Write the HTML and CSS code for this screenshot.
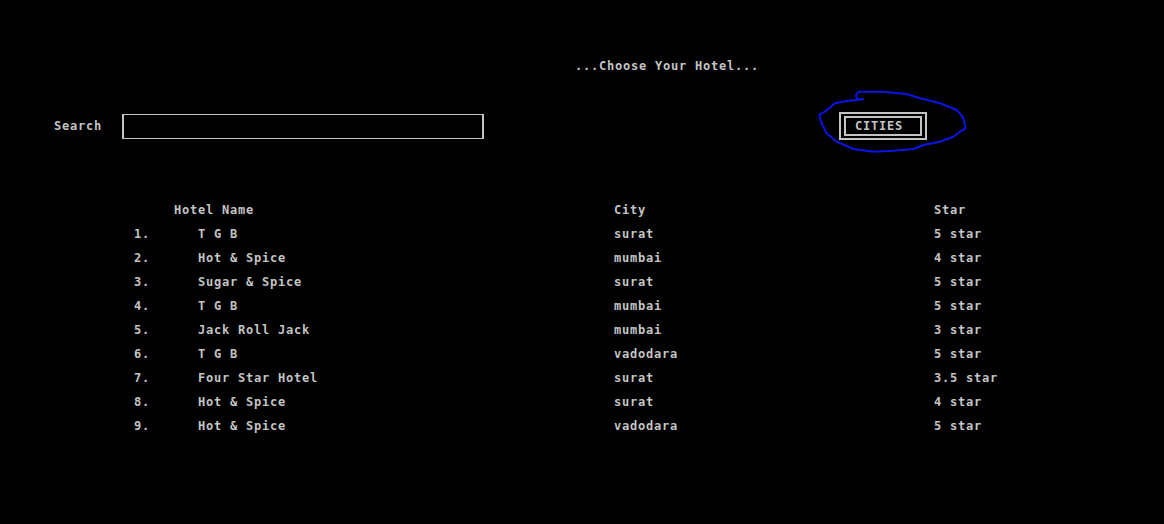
FILE: index.html
```html
<!DOCTYPE html>
<html>
<head>
<meta charset="utf-8">
<link rel="stylesheet" href="styles.css">
</head>
<body>
<div class="screen">
  <div class="title">...Choose Your Hotel...</div>
  <div class="search-row">
    <span class="label">Search</span>
    <div class="input"></div>
    <div class="cities"><span class="cities-inner">CITIES</span></div>
  </div>
  <div class="list">
    <div class="head-name">Hotel Name</div>
    <div class="head-city">City</div>
    <div class="head-star">Star</div>

    <div>1.</div><div>T G B</div><div>surat</div><div>5 star</div>
    <div>2.</div><div>Hot &amp; Spice</div><div>mumbai</div><div>4 star</div>
    <div>3.</div><div>Sugar &amp; Spice</div><div>surat</div><div>5 star</div>
    <div>4.</div><div>T G B</div><div>mumbai</div><div>5 star</div>
    <div>5.</div><div>Jack Roll Jack</div><div>mumbai</div><div>3 star</div>
    <div>6.</div><div>T G B</div><div>vadodara</div><div>5 star</div>
    <div>7.</div><div>Four Star Hotel</div><div>surat</div><div>3.5 star</div>
    <div>8.</div><div>Hot &amp; Spice</div><div>surat</div><div>4 star</div>
    <div>9.</div><div>Hot &amp; Spice</div><div>vadodara</div><div>5 star</div>
  </div>
  <svg class="scribble" width="1164" height="524" viewBox="0 0 1164 524">
    <path d="M863.3 99.3 L856.7 99 L856 95 L858.3 91.7 L883.3 91.7 L906.7 94 L916.7 97.3 L940 103.3 L956.7 110 L962.7 116.7 L965.7 128.3 L960 131.7 L953.3 136.7 L940 141.7 L923.3 145 L913.3 149 L893.3 150.7 L873.3 151.7 L853.3 149 L836.7 141.7 L826.7 133.3 L821.7 123.3 L819.3 115 L825 111.7 L835 103.3 L846.7 101 L863.3 99.3" fill="none" stroke="#0a14e6" stroke-width="2" stroke-linejoin="round" stroke-linecap="round"/>
  </svg>
</div>
</body>
</html>
```

FILE: styles.css
```css
html, body {
  margin: 0;
  padding: 0;
  background: #000;
}

.screen {
  position: relative;
  width: 1164px;
  height: 524px;
  overflow: hidden;
  background: #000;
  color: #c4c4c4;
  font-family: "DejaVu Sans Mono", "Liberation Mono", monospace;
  font-weight: bold;
  font-size: 12px;
  letter-spacing: 0.78px;
  line-height: 24px;
}

.title {
  padding-top: 54px;
  padding-left: 575px;
  height: 24px;
}

.search-row {
  margin-top: 34px;
  height: 28px;
  display: flex;
  align-items: center;
}

.label {
  margin-left: 54px;
  line-height: 16px;
}

.input {
  margin-left: 20px;
  width: 362px;
  height: 25px;
  box-sizing: border-box;
  border-style: solid;
  border-color: #c4c4c4;
  border-width: 1px 2px;
}

.cities {
  margin-left: 355px;
  box-sizing: border-box;
  width: 88px;
  height: 28px;
  border: 2px solid #c4c4c4;
  padding: 2px 3px;
}

.cities-inner {
  display: block;
  box-sizing: border-box;
  height: 20px;
  border: 2px solid #c4c4c4;
  padding-left: 9px;
  line-height: 16px;
}

.list {
  margin-top: 58px;
  padding-left: 134px;
  display: grid;
  grid-template-columns: 64px 416px 320px auto;
}

.head-name {
  grid-column: 1 / span 2;
  padding-left: 40px;
}

.scribble {
  position: absolute;
  left: 0;
  top: 0;
  pointer-events: none;
}
```
